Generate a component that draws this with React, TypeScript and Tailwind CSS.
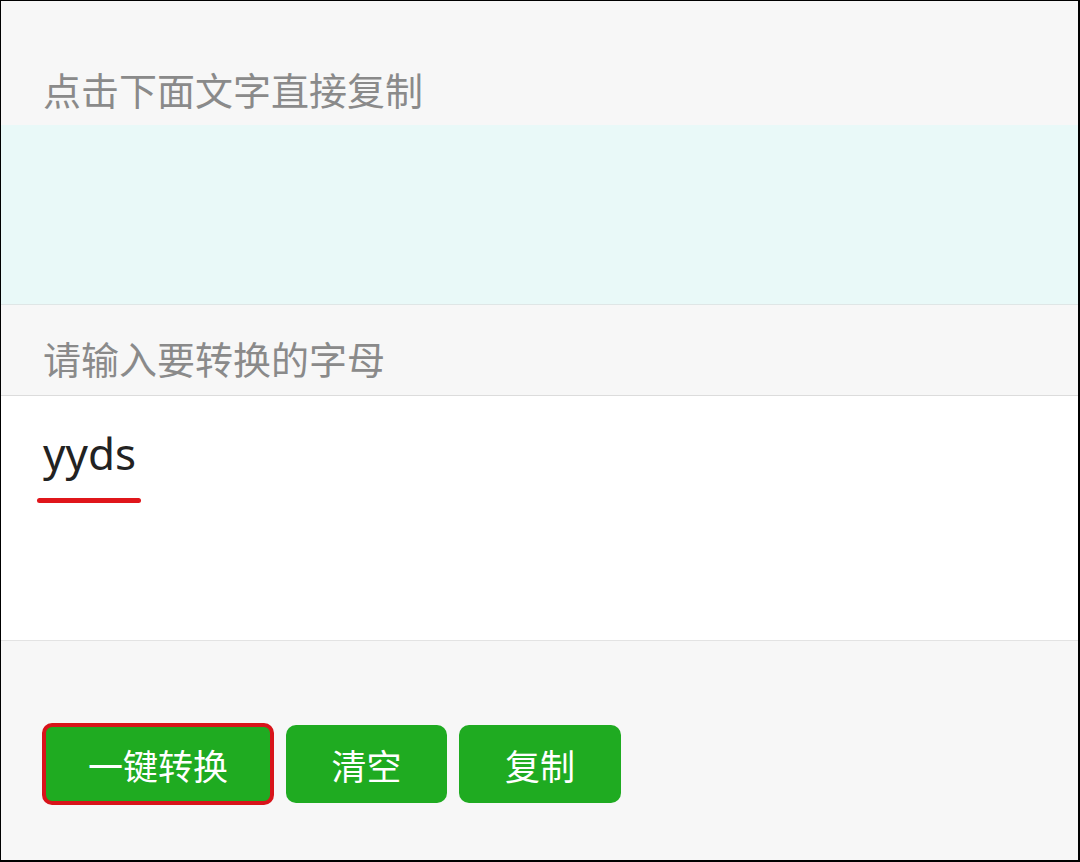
import React from "react";

export default function App() {
  const cjk = { fontFamily: '"Noto Sans CJK SC", "Noto Sans", sans-serif' };
  return (
    <div
      className="w-[1080px] h-[862px] box-border border-l border-t border-r-2 border-b-2 border-black bg-[#f7f7f7] flex flex-col overflow-hidden"
      style={cjk}
    >
      <div className="h-[124px] shrink-0 pt-[66px] px-[42px] bg-[#f7f7f7]">
        <div className="text-[38px] leading-[44px] text-[#8a8a8a]">点击下面文字直接复制</div>
      </div>
      <div className="h-[180px] shrink-0 bg-[#e9f9f8] border-b border-[#dfe6e6]" />
      <div className="h-[91px] shrink-0 pt-[31px] px-[42px] bg-[#f7f7f7] border-b border-[#dcdcdc]">
        <div className="text-[38px] leading-[44px] text-[#8a8a8a]">请输入要转换的字母</div>
      </div>
      <div className="h-[245px] shrink-0 bg-white border-b border-[#e3e3e3] pt-[31px]">
        <div
          className="pl-[42px] text-[44px] leading-[52px] text-[#222222]"
          style={{ fontFamily: '"Noto Sans", "Noto Sans CJK SC", sans-serif' }}
        >
          yyds
        </div>
        <div className="ml-[36px] mt-[19px] w-[104px] h-[5px] rounded-full bg-[#e0161b]" />
      </div>
      <div className="flex-1 bg-[#f7f7f7] pt-[82px] pl-[41px]">
        <div className="flex items-center gap-[12px]">
          <button className="w-[232px] h-[82px] rounded-[10px] border-[4px] border-[#d8141a] bg-[#1fab21] text-white text-[35px] leading-none flex items-center justify-center">
            一键转换
          </button>
          <button className="w-[161px] h-[78px] rounded-[10px] bg-[#1fab21] text-white text-[35px] leading-none flex items-center justify-center">
            清空
          </button>
          <button className="w-[162px] h-[78px] rounded-[10px] bg-[#1fab21] text-white text-[35px] leading-none flex items-center justify-center">
            复制
          </button>
        </div>
      </div>
    </div>
  );
}
